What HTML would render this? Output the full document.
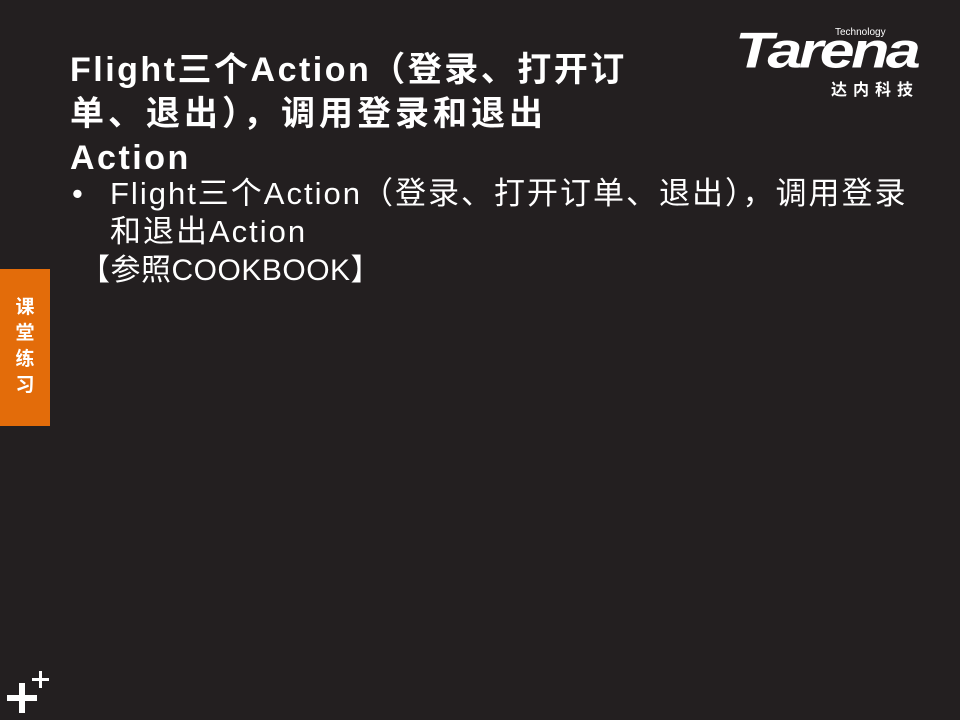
<!DOCTYPE html>
<html><head><meta charset="utf-8"><style>
body{margin:0;width:960px;height:720px;background:#231f20;position:relative;overflow:hidden;color:#fff;font-family:"Liberation Sans","Noto Sans CJK SC",sans-serif}
.t{position:absolute;left:70px;top:48px;font-size:34px;font-weight:bold;line-height:44px;width:700px;letter-spacing:2.5px}
.b{position:absolute;left:72px;top:175px;font-size:31px;line-height:38px}
.b .i{position:absolute;left:38px;top:0;width:860px;letter-spacing:2px}
.c{position:absolute;left:80px;top:252px;font-size:30px;line-height:38px;letter-spacing:0.5px}
.tab{position:absolute;left:0;top:269px;width:50px;height:157px;background:#e36c0a;font-weight:bold;font-size:19px;line-height:26px;text-align:center;padding-top:26px;box-sizing:border-box}
.p{position:absolute;background:#fff}
</style></head><body>
<div class="t">Flight三个Action（登录、打开订<br><span style="letter-spacing:4px">单、退出），调用登录和退出</span><br>Action</div>
<div class="b"><span>•</span><div class="i">Flight三个Action（登录、打开订单、退出），调用登录<br>和退出Action</div></div>
<div class="c">【参照COOKBOOK】</div>
<div class="tab">课<br>堂<br>练<br>习</div>
<div style="position:absolute;left:735px;top:22px;width:195px">
<div style="position:absolute;left:100px;top:5px;font-size:10px">Technology</div>
<div style="position:absolute;left:0;top:4px;font-size:54px;font-weight:bold;font-style:italic;letter-spacing:-3px;line-height:54px;transform:scale(1.16,0.92);transform-origin:top left">Tarena</div>
<div style="position:absolute;left:96px;top:54px;font-size:16px;font-weight:bold;letter-spacing:6px">达内科技</div>
</div>
<div class="p" style="left:7px;top:695px;width:30px;height:6px"></div>
<div class="p" style="left:19px;top:683px;width:6px;height:30px"></div>
<div class="p" style="left:32px;top:678px;width:17px;height:3px"></div>
<div class="p" style="left:39px;top:671px;width:3px;height:17px"></div>
</body></html>
